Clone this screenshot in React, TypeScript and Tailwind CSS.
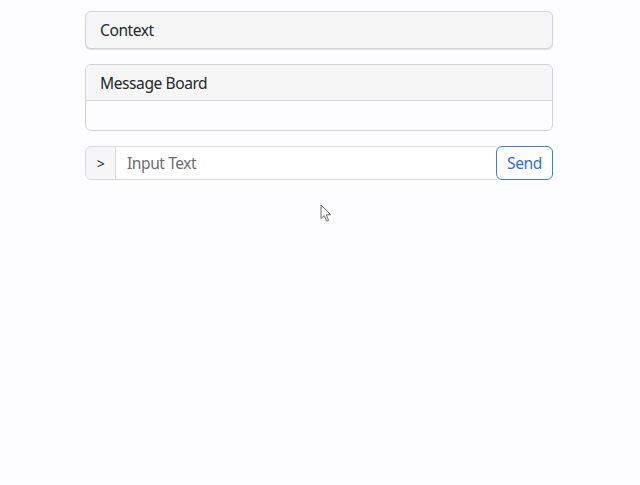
import React from 'react';

function Cursor() {
  return (
    <svg className="absolute left-[320px] top-[204px]" width="13" height="19" viewBox="0 0 13 19">
      <path d="M1 1 L1 14.5 L4.2 11.6 L6.6 17.2 L8.6 16.3 L6.3 10.8 L10.8 10.8 Z" fill="#ffffff" stroke="#6b6b6b" strokeWidth="1" strokeLinejoin="round" />
    </svg>
  );
}

export default function App() {
  return (
    <div className="relative min-h-[485px] bg-[#fdfcff] pt-[11px] text-[#25272b] font-['Noto_Sans',sans-serif] text-[15.6px] tracking-[-0.45px]">
      <div className="ml-[85px] w-[468px] flex flex-col">
        {/* Context card */}
        <div className="rounded-[6px] border border-[#d3d3d6] bg-[#f6f6f7] shadow-[0_1px_1px_rgba(0,0,0,0.12)]">
          <div className="h-[36px] px-[14px] pt-[2px] flex items-center">Context</div>
        </div>

        {/* Message board */}
        <div className="mt-[15px] rounded-[6px] border border-[#d3d3d6] bg-[#fdfcff] overflow-hidden">
          <div className="h-[36px] px-[14px] pt-[2px] flex items-center bg-[#f6f6f7] border-b border-[#d3d3d6]">Message Board</div>
          <div className="h-[29px]" />
        </div>

        {/* Input group */}
        <div className="mt-[15px] flex h-[34px]">
          <div className="w-[31px] pt-px flex items-center justify-center rounded-l-[6px] border border-[#dcdcdf] bg-[#f6f6f7] text-[14px]">&gt;</div>
          <input
            className="flex-1 min-w-0 border-y border-[#dcdcdf] bg-white px-[11px] pt-[2px] outline-none tracking-[-0.45px] placeholder:text-[#6c6c72]"
            placeholder="Input Text"
          />
          <button className="w-[57px] pt-[2px] rounded-[6px] border border-[#3d7fe0] bg-white text-[#2f6fd6]">Send</button>
        </div>
      </div>
      <Cursor />
    </div>
  );
}
